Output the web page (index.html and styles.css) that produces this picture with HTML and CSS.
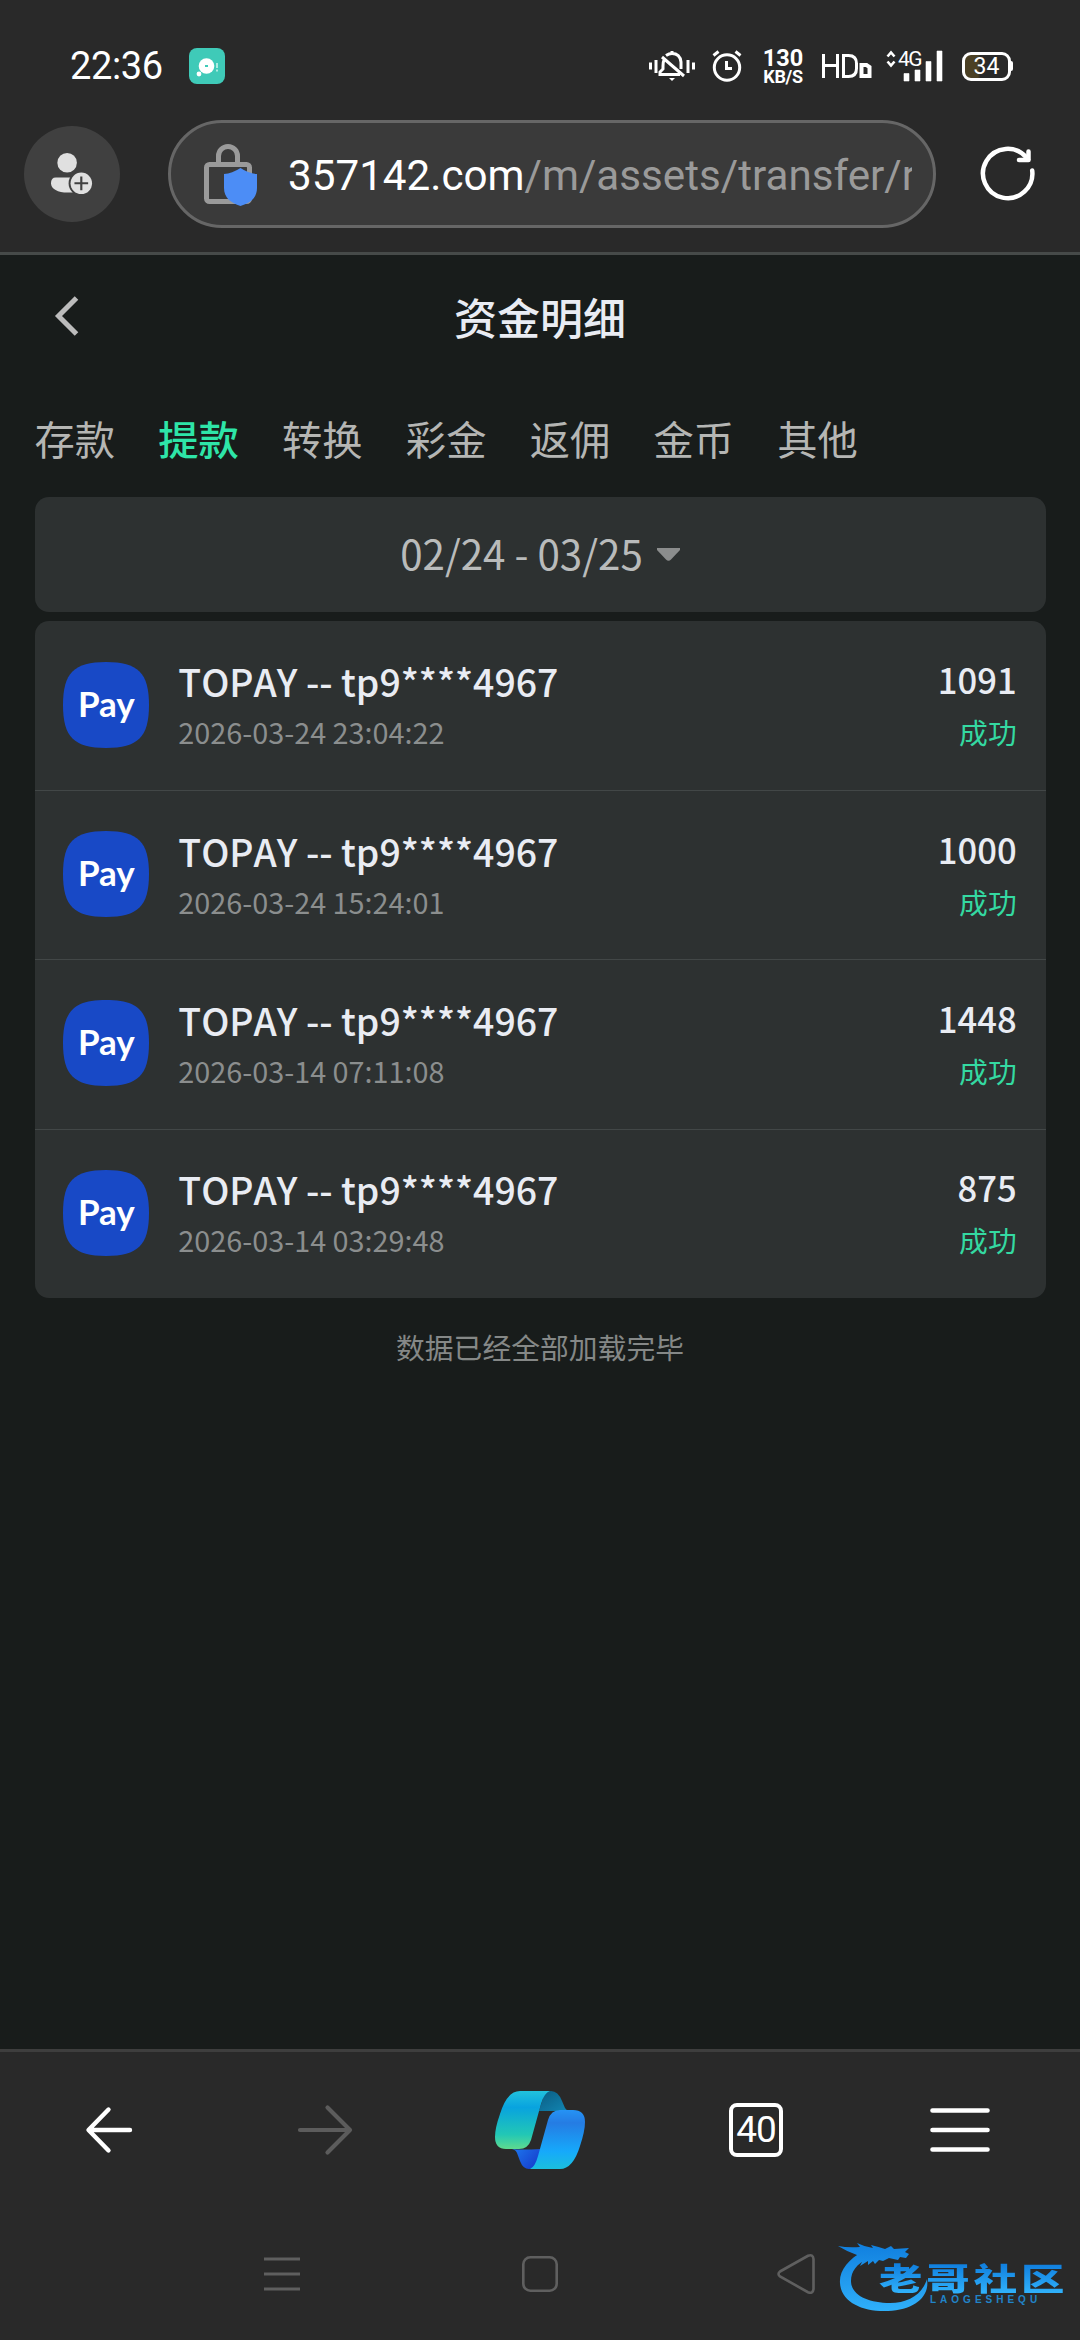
FILE: index.html
```html
<!DOCTYPE html>
<html lang="zh-CN">
<head>
<meta charset="utf-8">
<meta name="viewport" content="width=device-width">
<title>资金明细</title>
<link rel="stylesheet" href="styles.css">
</head>
<body>
<div class="screen">
  <header class="browser-top">
    <div class="status-bar">
      <span class="clock">22:36</span>
      <svg class="app-note" viewBox="0 0 36 36"><rect width="36" height="36" rx="8" fill="#3fcab8"/><circle cx="17.5" cy="18" r="7.8" fill="#fff"/><circle cx="10" cy="26" r="2.4" fill="#fff"/><rect x="16" y="17" width="3" height="2" fill="#3fcab8"/><path d="M28 15v5M28 21.5v2" stroke="#c8f3ec" stroke-width="1.6"/></svg>
      <svg class="icon-bell" viewBox="0 0 46 30" fill="none" stroke="#fff" stroke-width="3"><path d="M1.500 11.500v7M7 9v13M39 9v13M44.500 11.500v7"/><path d="M15 9q-1 2-1 6v3l-3 3v2.500h20M17 4.500q3-2 6-2 8 0 9 8.500v7M13 6l22 19M23 0v4"/><path d="M20 27h6l-3 3z" fill="#fff" stroke="none"/></svg>
      <svg class="icon-alarm" viewBox="0 0 30 32" fill="none" stroke="#fff" stroke-width="3"><circle cx="15" cy="17.500" r="12.700"/><path d="M14.500 11v7.500H20M1.500 5.500l5-4M28.500 5.500l-5-4"/></svg>
      <span class="speed"><b>130</b><b>KB/S</b></span>
      <svg class="icon-hd" viewBox="0 0 50 26" fill="none" stroke="#fff" stroke-width="3"><path d="M1.500 1v24M15.500 1v24M1.500 12.500h14M21.500 2.500v21h5q8 0 8-8v-5q0-8-8-8z"/><path d="M39.500 12h5l3 2v9h-8z" stroke-width="4"/></svg>
      <div class="signal">
        <svg viewBox="0 0 57 31"><path d="M1.500 5.500l3.500-4 3.500 4M1.500 10.500l3.500 4 3.500-4" fill="none" stroke="#fff" stroke-width="2.600"/><path d="M18 22.500h5V30h-5zM29 19h5v11h-5zM40 10.500h5V30h-5zM51 0h5v30h-5z" fill="#fff" stroke="#fff" stroke-width=".6"/></svg>
        <span class="signal-gen">4G</span>
      </div>
      <span class="battery">34</span>
    </div>
    <div class="address-row">
      <div class="profile"><svg viewBox="0 0 44 44"><circle cx="16.500" cy="10" r="10" fill="#e0e0e0"/><path d="M5 25h22v15.500H17C7 40.500 0 37 0 31q0-6 5-6z" fill="#e0e0e0"/><circle cx="31" cy="31" r="13" fill="#404040"/><circle cx="31" cy="31" r="11" fill="#e0e0e0"/><path d="M24 31h14M31 24v14" stroke="#404040" stroke-width="2.200"/></svg></div>
      <div class="url-pill">
        <svg class="lock" viewBox="0 0 54 62"><rect x="2.500" y="20.500" width="43" height="37" rx="3" fill="none" stroke="#9a9a9a" stroke-width="5"/><path d="M14.500 20v-8a9.500 9.500 0 0 1 19 0v8" fill="none" stroke="#9a9a9a" stroke-width="5"/><path d="M36.500 24q8 5.500 16.500 6v14c0 10-7 15-16.500 18C27 59 20 54 20 44V30q8-.5 16.500-6z" fill="#4c8df6"/></svg>
        <span class="url">357142.com<i>/m/assets/transfer/record</i></span>
      </div>
      <svg class="reload" viewBox="0 0 54 54" fill="none" stroke="#fff" stroke-width="4.500" stroke-linecap="round" stroke-linejoin="round"><path d="M51.200 23.500A24.700 24.700 0 1 1 45.500 10.500L47 12.500"/><path d="M47.500 4.500v8.500H38"/></svg>
    </div>
  </header>
  <main class="page">
    <div class="title-bar">
      <svg class="back" viewBox="0 0 24 40"><path d="M21.500 2L3.500 20l18 18" fill="none" stroke="#bcbcbc" stroke-width="5"/></svg>
      <h1>资金明细</h1>
    </div>
    <nav class="tabs"><span>存款</span><span class="active">提款</span><span>转换</span><span>彩金</span><span>返佣</span><span>金币</span><span>其他</span></nav>
    <div class="date-range"><span>02/24 - 03/25</span><svg viewBox="0 0 23 13"><path d="M0 0h23v2l-9 9.500q-2.500 2.500-5 0L0 2z" fill="#8b8d8d"/></svg></div>
    <section class="list">
      <div class="row"><div class="pay"><svg viewBox="0 0 86 86"><path d="M43 0C75 0 86 11 86 43S75 86 43 86 0 75 0 43 11 0 43 0z"/></svg><span>Pay</span></div><div class="info"><span class="name">TOPAY -- tp9****4967</span><span class="time">2026-03-24 23:04:22</span></div><div class="result"><span class="amount">1091</span><span class="state">成功</span></div></div>
      <div class="row"><div class="pay"><svg viewBox="0 0 86 86"><path d="M43 0C75 0 86 11 86 43S75 86 43 86 0 75 0 43 11 0 43 0z"/></svg><span>Pay</span></div><div class="info"><span class="name">TOPAY -- tp9****4967</span><span class="time">2026-03-24 15:24:01</span></div><div class="result"><span class="amount">1000</span><span class="state">成功</span></div></div>
      <div class="row"><div class="pay"><svg viewBox="0 0 86 86"><path d="M43 0C75 0 86 11 86 43S75 86 43 86 0 75 0 43 11 0 43 0z"/></svg><span>Pay</span></div><div class="info"><span class="name">TOPAY -- tp9****4967</span><span class="time">2026-03-14 07:11:08</span></div><div class="result"><span class="amount">1448</span><span class="state">成功</span></div></div>
      <div class="row"><div class="pay"><svg viewBox="0 0 86 86"><path d="M43 0C75 0 86 11 86 43S75 86 43 86 0 75 0 43 11 0 43 0z"/></svg><span>Pay</span></div><div class="info"><span class="name">TOPAY -- tp9****4967</span><span class="time">2026-03-14 03:29:48</span></div><div class="result"><span class="amount">875</span><span class="state">成功</span></div></div>
    </section>
    <p class="finished">数据已经全部加载完毕</p>
  </main>
  <footer class="browser-bottom">
    <div class="toolbar">
      <div><svg width="46" height="46" viewBox="0 0 46 46" fill="none" stroke="#fff" stroke-width="4.400" stroke-linecap="round" stroke-linejoin="round"><path d="M44 23H3M22.500 2.500L2.500 23l20 20.500"/></svg></div>
      <div><svg width="54" height="50" viewBox="0 0 54 50" fill="none" stroke="#5c5c5c" stroke-width="4.200" stroke-linecap="round" stroke-linejoin="round"><path d="M2 25h50M29.500 2.500L52 25 29.500 47.500"/></svg></div>
      <div><svg width="90" height="78" viewBox="0 0 90 78">
        <defs>
          <linearGradient id="cl" x1="0" y1="0" x2="0" y2="1"><stop offset="0" stop-color="#22c2dd"/><stop offset=".28" stop-color="#08a3df"/><stop offset=".75" stop-color="#22c7b5"/><stop offset="1" stop-color="#5fda8e"/></linearGradient>
          <linearGradient id="cr" x1="0" y1="0" x2="0" y2="1"><stop offset="0" stop-color="#2593f5"/><stop offset=".22" stop-color="#257ce3"/><stop offset=".7" stop-color="#16a9fb"/><stop offset="1" stop-color="#1bbfdd"/></linearGradient>
          <linearGradient id="ct" x1="0" y1="0" x2="1" y2="1"><stop offset="0" stop-color="#0b5c82"/><stop offset="1" stop-color="#1287b4"/></linearGradient>
          <linearGradient id="cb" x1="0" y1="0" x2="1" y2=".6"><stop offset="0" stop-color="#1d78ee"/><stop offset="1" stop-color="#163fce"/></linearGradient>
        </defs>
        <path d="M44 20L49 4q3-4 7-4 7 0 11 10l3 7q1 2 4 2.500-8 0-12 .5z" fill="url(#ct)"/>
        <path d="M17 58q8 1 29 0l-4 16q-4 4-8 4-6 0-9-8l-3-8q-1-3-5-4z" fill="url(#cb)"/>
        <path d="M35 78q5-2 8-13l10-36q3-10 12-10h13q12 0 12 12 0 9-5 24-7 23-20 23z" fill="url(#cr)"/>
        <path d="M55 0q-6 2-9 13l-10 36q-3 9-12 9H11Q0 58 0 46q0-9 5-23Q12 0 25 0z" fill="url(#cl)"/>
      </svg></div>
      <div><span class="tab-count">40</span></div>
      <div><svg width="60" height="46" viewBox="0 0 60 46" stroke="#fff" stroke-width="4.600" stroke-linecap="round"><path d="M2.500 3.500h55M2.500 23h55M2.500 42.500h55"/></svg></div>
    </div>
    <div class="system-nav">
      <svg width="36" height="36" viewBox="0 0 36 36" stroke="#5f5f5f" stroke-width="2.800"><path d="M0 3h36M0 18h36M0 33h36"/></svg>
      <svg width="36" height="36" viewBox="0 0 36 36"><rect x="1.300" y="1.300" width="33.400" height="33.400" rx="7" fill="none" stroke="#5f5f5f" stroke-width="2.600"/></svg>
      <svg class="sys-back" width="38" height="40" viewBox="0 0 38 40"><path d="M3 17.500L31 1.800q5-2 5.500 3.200v30q-.5 5-5.500 3.200L3 22.500q-3-2.500 0-5z" fill="none" stroke="#5f5f5f" stroke-width="2.600"/></svg>
    </div>
    <div class="watermark">
      <svg viewBox="0 0 230 104"><defs><linearGradient id="wg" gradientUnits="userSpaceOnUse" x1="0" y1="6" x2="0" y2="72"><stop offset="0" stop-color="#1180df"/><stop offset="1" stop-color="#2fb0fa"/></linearGradient></defs>
      <path d="M26 12C10 20 1 32 2 44c1 19 22 29 48 28 26-1 42-14 39-32-5 16-19 24-37 24-22 0-39-8-39-22 0-10 6-17 16-22z" fill="url(#wg)"/>
      <path d="M0 7q10 2 22 1L19 4q8 4 16 5l-2-3q8 2 14 4l6-3 3 3 15-1-4 4 4 2-3 4-6-1-2 3-9-2-6 3-4-1-4 4-2-3-5 4v-4l-8 5 2-4-5-7Q8 12 0 7z" fill="url(#wg)"/></svg>
      <span class="mark-name">老哥社区</span>
      <span class="mark-latin">LAOGESHEQU</span>
    </div>
  </footer>
</div>
</body>
</html>
```

FILE: styles.css
```css
* { box-sizing: border-box; }
body { margin: 0; background: #181c1b; font-family: "Noto Sans CJK SC", sans-serif; }
svg { display: block; flex: none; overflow: visible; }
.screen { width: 1080px; height: 2340px; display: flex; flex-direction: column; overflow: hidden; }

.browser-top { height: 255px; background: #292929; border-bottom: 3px solid #464a49; font-family: Roboto, sans-serif; color: #fff; }
.status-bar { height: 120px; padding: 12px 69px 0 70px; display: flex; align-items: center; }
.clock { width: 119px; font-size: 38px; line-height: 44px; letter-spacing: -0.4px; }
.app-note { width: 36px; height: 36px; }
.icon-bell { width: 46px; height: 30px; margin-left: 424px; }
.icon-alarm { width: 30px; height: 32px; margin-left: 17px; }
.speed { width: 42px; margin-left: 20px; display: flex; flex-direction: column; align-items: center; }
.speed b { font-size: 23.5px; line-height: 20px; font-weight: 700; }
.speed b + b { font-size: 18px; line-height: 17px; letter-spacing: -0.3px; }
.icon-hd { width: 50px; height: 26px; margin-left: 18px; }
.signal { width: 57px; height: 31px; margin-left: 14px; position: relative; }
.signal-gen { position: absolute; left: 12px; top: -2px; font-size: 21px; line-height: 20px; letter-spacing: -1.5px; }
.battery { width: 49px; height: 29px; margin-left: auto; border: 3px solid #fff; border-radius: 9px; font-size: 23px; line-height: 23px; text-align: center; background: linear-gradient(90deg, #4b4024 30%, #292929 36%); position: relative; }
.battery::after { content: ""; position: absolute; right: -5px; top: 6px; width: 3px; height: 10px; background: #fff; border-radius: 0 2px 2px 0; }

.address-row { height: 108px; display: flex; align-items: center; padding: 0 45px 0 24px; }
.profile { width: 96px; height: 96px; border-radius: 50%; background: #404040; display: flex; align-items: center; justify-content: center; }
.profile svg { width: 43px; height: 43px; }
.url-pill { width: 768px; height: 108px; margin-left: 48px; border: 3px solid #666; border-radius: 54px; background: #3a3a3a; display: flex; align-items: center; padding: 0 21px 0 33px; }
.lock { width: 54px; height: 62px; margin-top: 2px; }
.url { margin: 4px 0 0 30px; flex: 1; overflow: hidden; white-space: nowrap; font-size: 42.2px; line-height: 54px; }
.url i { font-style: normal; color: #9a9a9a; }
.reload { width: 54px; height: 54px; margin-left: 45px; }

.page { flex: 1; padding: 0 34.5px; }
.title-bar { height: 124px; display: grid; grid-template-columns: 100px 1fr 100px; align-items: center; }
.back { width: 24px; height: 40px; margin: -2px 0 0 20px; }
h1 { margin: -3px 0 0; text-align: center; font-size: 43px; font-weight: 500; line-height: 60px; color: #e9ecf3; }
.tabs { height: 118px; display: flex; gap: 43.2px; align-items: center; font-size: 40.3px; line-height: 58px; color: #b5b6b4; }
.tabs .active { color: #2ee5a8; font-weight: 500; }
.date-range { height: 115px; border-radius: 14px; background: #2d3131; display: flex; align-items: center; justify-content: center; gap: 14px; font-size: 40.3px; line-height: 58px; color: #b9bbbb; }
.date-range span { margin-top: -3px; }
.date-range svg { width: 23px; height: 13px; }
.list { margin-top: 9px; border-radius: 14px; background: #2d3131; }
.row { height: 169.2px; padding: 0 28.8px; display: flex; align-items: center; }
.row + .row { border-top: 1px solid #424747; }
.pay { width: 86px; height: 86px; margin-top: -2px; position: relative; fill: #1849c6; }
.pay span { position: absolute; inset: 0; text-align: center; font: 700 35px/82px Lato, sans-serif; color: #fff; }
.info { margin: 1px 0 0 29px; display: flex; flex-direction: column; }
.name { font-size: 37.4px; line-height: 52px; font-weight: 500; font-kerning: none; color: #e9ecf3; }
.time { font-size: 28.8px; line-height: 50px; color: #8b8e8e; }
.result { margin: 1px 0 0 auto; display: flex; flex-direction: column; align-items: flex-end; }
.amount { font-size: 34.6px; line-height: 51px; font-weight: 500; color: #e9ecf3; }
.state { font-size: 28.8px; line-height: 53px; color: #34d9a1; }
.finished { margin: 28px 0 0; text-align: center; font-size: 28.8px; line-height: 42px; color: #858887; }

.browser-bottom { height: 291px; background: #292929; border-top: 3px solid #3e3e3e; font-family: Roboto, sans-serif; position: relative; }
.toolbar { height: 156px; display: grid; grid-template-columns: 218px 214px 216px 216px 192px; align-items: center; }
.toolbar div { display: flex; justify-content: center; }
.tab-count { width: 54px; height: 54px; border: 4px solid #fff; border-radius: 8px; color: #fff; font-size: 37px; line-height: 46px; letter-spacing: -1px; text-align: center; }
.system-nav { height: 132px; padding-left: 264px; display: flex; gap: 222px; align-items: center; }
.sys-back { margin-left: -3px; }
.watermark { position: absolute; left: 838px; top: 187px; width: 230px; height: 104px; }
.watermark svg { position: absolute; inset: 0; width: 230px; height: 104px; }
.mark-name { position: absolute; left: 41px; top: 8px; font: 900 31px/60px "Noto Sans CJK SC", sans-serif; letter-spacing: 2.8px; transform: scaleX(1.4); transform-origin: left; white-space: nowrap; color: transparent; background: linear-gradient(#1180df 30%, #2fb0fa 75%); background-clip: text; }
.mark-latin { position: absolute; left: 92px; top: 55px; font: 700 10px/12px "Liberation Sans", sans-serif; letter-spacing: 4px; color: #2184c8; white-space: nowrap; }
```
